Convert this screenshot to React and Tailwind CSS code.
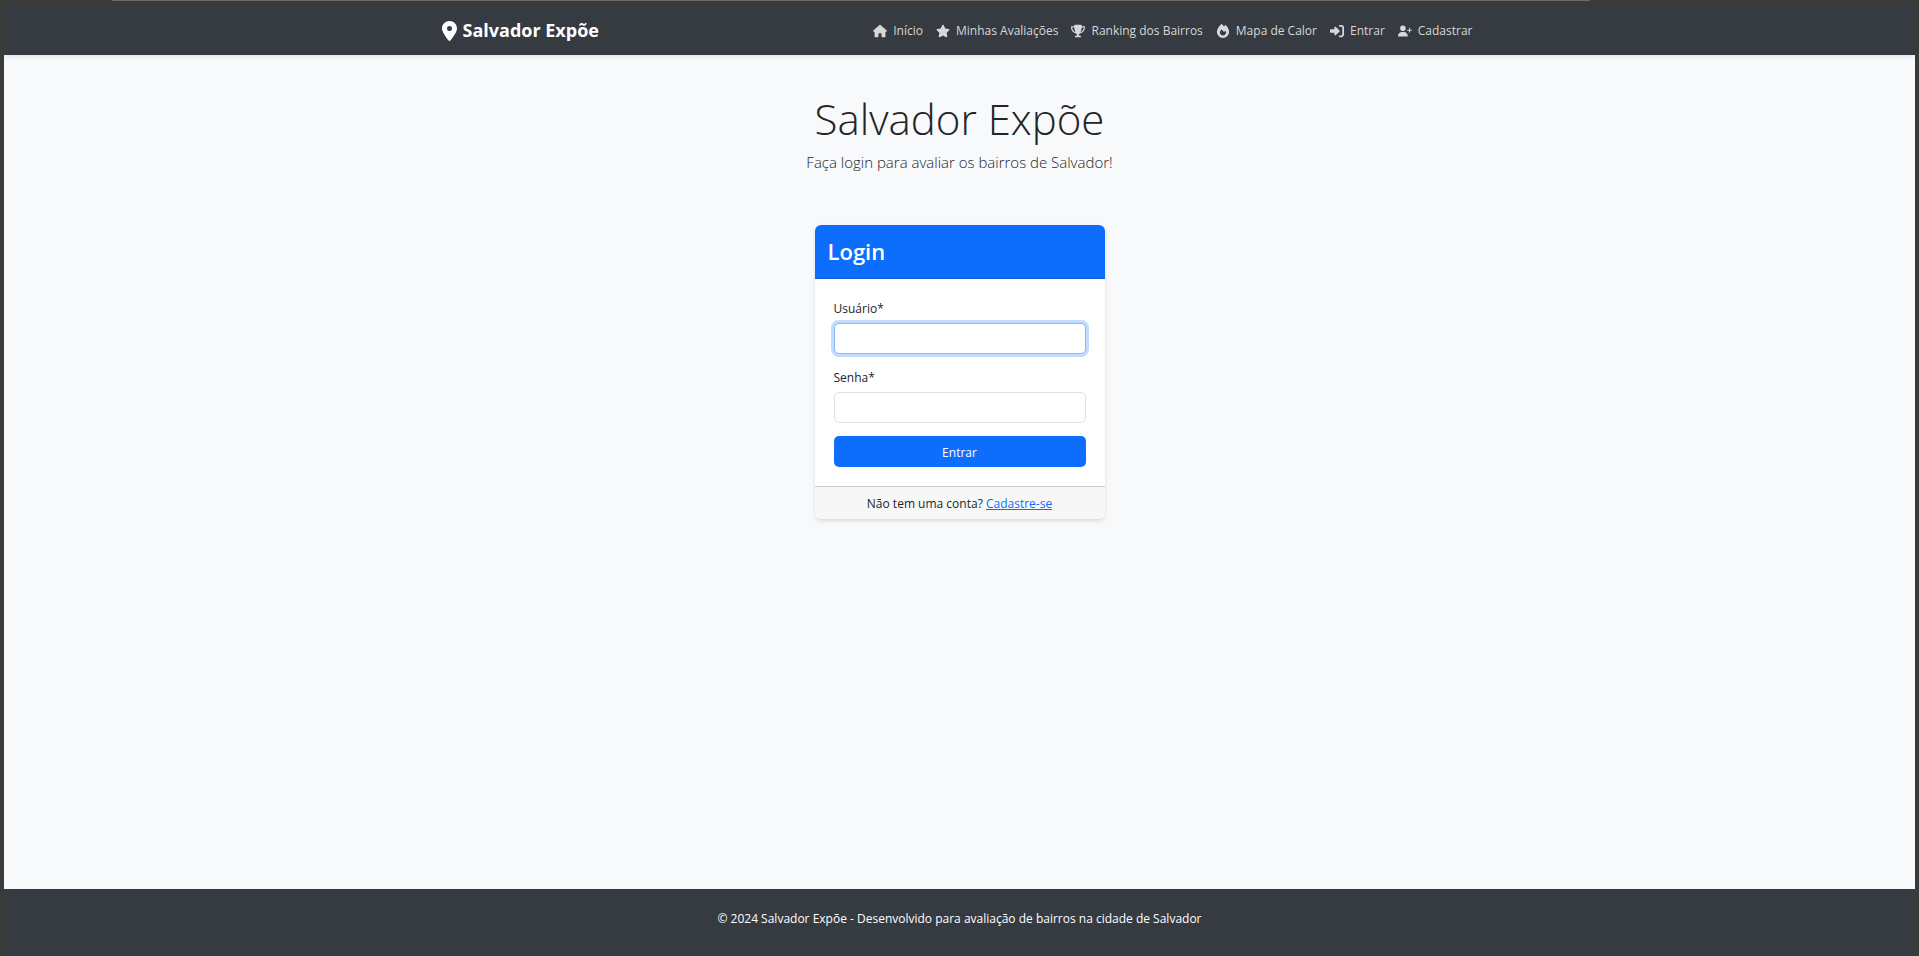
import React from "react";
import {
  FaLocationDot,
  FaHouse,
  FaStar,
  FaTrophy,
  FaFire,
  FaRightToBracket,
  FaUserPlus,
} from "react-icons/fa6";

const links = [
  { label: "Início", Icon: FaHouse },
  { label: "Minhas Avaliações", Icon: FaStar },
  { label: "Ranking dos Bairros", Icon: FaTrophy },
  { label: "Mapa de Calor", Icon: FaFire },
  { label: "Entrar", Icon: FaRightToBracket },
  { label: "Cadastrar", Icon: FaUserPlus },
];

function Navbar() {
  return (
    <nav className="relative bg-[#363a41] shadow-[0_2px_4px_rgba(0,0,0,0.08)]">
      <div className="mx-auto flex h-[50px] max-w-[1056px] items-center justify-between px-[10px] pt-px">
        <a href="#" className="flex items-center gap-[6px] text-[18px] font-bold text-white">
          <FaLocationDot viewBox="0 0 384 512" className="h-5 w-[15px] shrink-0" />
          Salvador Expõe
        </a>
        <ul className="flex items-center gap-[13px] pr-[5px]">
          {links.map(({ label, Icon }) => (
            <li key={label}>
              <a href="#" className="flex items-center gap-[6px] text-[12px] text-[#d7d8d9]">
                <Icon className="h-[14px] w-auto shrink-0" />
                {label}
              </a>
            </li>
          ))}
        </ul>
      </div>
    </nav>
  );
}

function Field({ id, label, type, focused }) {
  return (
    <div className="mb-[13px]">
      <label htmlFor={id} className="mb-1 block text-[12px] leading-5">
        {label}*
      </label>
      <input
        id={id}
        type={type}
        required
        className={
          focused
            ? "block h-[31px] w-full rounded-[5px] border border-[#86b7fe] bg-white px-[10px] text-[12px] shadow-[0_0_0_3px_#c2dbff] outline-none"
            : "block h-[31px] w-full rounded-[5px] border border-[#dee2e6] bg-white px-[10px] text-[12px] outline-none"
        }
      />
    </div>
  );
}

function LoginCard() {
  return (
    <section className="w-[290px] overflow-hidden rounded-md bg-white shadow-[0_2px_4px_rgba(0,0,0,0.12)]">
      <header className="border-b border-[#0b5ed7] bg-[#0d6efd] px-[13px] py-[13px]">
        <h2 className="text-[22px] leading-[27px] font-semibold text-white">Login</h2>
      </header>
      <form className="px-[19px] pt-5 pb-[19px]" onSubmit={(e) => e.preventDefault()}>
        <Field id="username" label="Usuário" type="text" focused />
        <div className="pt-px">
          <Field id="password" label="Senha" type="password" />
        </div>
        <button
          type="submit"
          className="block h-[31px] w-full rounded-[5px] bg-[#0d6efd] pt-0.5 text-[12px] text-white"
        >
          Entrar
        </button>
      </form>
      <footer className="border-t border-[#c8c8c8] bg-[#f7f7f7] pt-[7px] pb-[5px] text-center text-[12px] leading-5">
        Não tem uma conta?{" "}
        <a href="#" className="text-[#0d6efd] underline">
          Cadastre-se
        </a>
      </footer>
    </section>
  );
}

export default function App() {
  return (
    <div className="flex min-h-screen flex-col bg-[#3a3a39] px-1 font-['Open_Sans','Noto_Sans',sans-serif] text-[#212529]">
      <div className="mr-[17%] ml-[108px] h-px bg-[#6a6b6a]" />
      <div className="mt-1 flex grow flex-col overflow-hidden rounded-lg">
        <Navbar />
        <main className="flex grow flex-col items-center bg-[#f8f9fb] pt-[37px] pb-10">
          <h1 className="text-[42px] leading-[54px] font-light">Salvador Expõe</h1>
          <p className="mt-1 text-[15px] leading-[24px] font-light">
            Faça login para avaliar os bairros de Salvador!
          </p>
          <div className="mt-[51px]">
            <LoginCard />
          </div>
        </main>
        <footer className="bg-[#363a41] pt-5 pb-7 text-center text-[12px] leading-[19px] text-white">
          © 2024 Salvador Expõe - Desenvolvido para avaliação de bairros na cidade de Salvador
        </footer>
      </div>
    </div>
  );
}
